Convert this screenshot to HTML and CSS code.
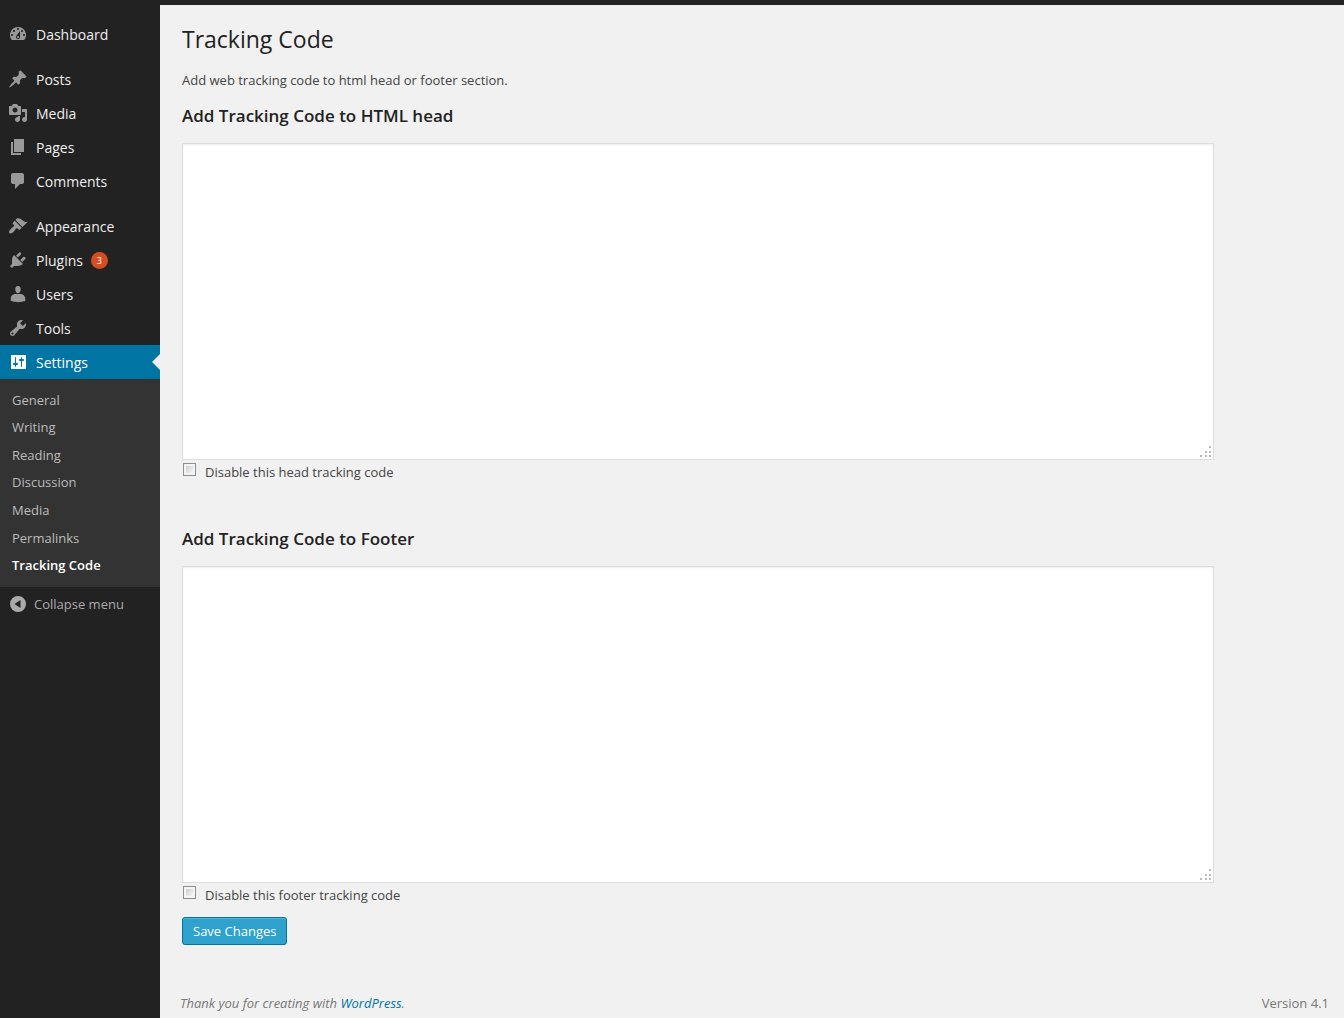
FILE: index.html
```html
<!DOCTYPE html>
<html lang="en">
<head>
<meta charset="utf-8">
<meta name="viewport" content="width=device-width, initial-scale=1">
<title>Tracking Code</title>
<link rel="stylesheet" href="styles.css">
</head>
<body>
<div class="topbar"></div>
<div class="layout">
  <nav class="sidebar" aria-label="Main menu">
    <ul class="menu">
      <li><a class="item" href="#"><svg class="icon" viewBox="0 0 20 20"><path fill-rule="evenodd" d="M3.76 16h12.48A7.998 7.998 0 0 0 10 3a7.998 7.998 0 0 0-6.24 13zM10 4c.55 0 1 .45 1 1s-.45 1-1 1-1-.45-1-1 .45-1 1-1zM6 6c.55 0 1 .45 1 1s-.45 1-1 1-1-.45-1-1 .45-1 1-1zm8 0c.55 0 1 .45 1 1s-.45 1-1 1-1-.45-1-1 .45-1 1-1zm-5.37 5.55L12 7v6c0 1.1-.9 2-2 2s-2-.9-2-2c0-.57.24-1.08.63-1.45zM4 10c.55 0 1 .45 1 1s-.45 1-1 1-1-.45-1-1 .45-1 1-1zm12 0c.55 0 1 .45 1 1s-.45 1-1 1-1-.45-1-1 .45-1 1-1zm-5 3c0-.55-.45-1-1-1s-1 .45-1 1 .45 1 1 1 1-.45 1-1z"/></svg>Dashboard</a></li>
      <li class="group"><a class="item" href="#"><svg class="icon" viewBox="0 0 20 20"><path d="M10.44 3.02l1.82-1.82 6.36 6.35-1.83 1.82c-1.05-.68-2.48-.57-3.41.36l-.75.75c-.92.93-1.04 2.35-.35 3.41l-1.83 1.82-2.41-2.41-2.8 2.79c-.42.42-3.38 2.71-3.8 2.29s1.86-3.39 2.28-3.81l2.79-2.79L4.1 9.36l1.83-1.82c1.05.69 2.48.57 3.4-.36l.75-.75c.93-.92 1.05-2.35.36-3.41z"/></svg>Posts</a></li>
      <li><a class="item" href="#"><svg class="icon" viewBox="0 0 20 20"><path fill-rule="evenodd" d="M13 11V4c0-.55-.45-1-1-1h-1.67L9 1H5L3.67 3H2c-.55 0-1 .45-1 1v7c0 .55.45 1 1 1h10c.55 0 1-.45 1-1zM7 4.5c1.38 0 2.5 1.12 2.5 2.5S8.38 9.5 7 9.5 4.5 8.38 4.5 7 5.62 4.5 7 4.5zM14 6h5v10.5c0 1.38-1.12 2.5-2.5 2.5S14 17.88 14 16.5s1.12-2.5 2.5-2.5c.17 0 .34.02.5.05V9h-3V6zm-4 8.05V13h2v3.5c0 1.38-1.12 2.5-2.5 2.5S7 17.88 7 16.5 8.12 14 9.5 14c.17 0 .34.02.5.05z"/></svg>Media</a></li>
      <li><a class="item" href="#"><svg class="icon" viewBox="0 0 20 20"><path d="M6 15V2h10v13H6zm-1 1h8v2H3V5h2v11z"/></svg>Pages</a></li>
      <li><a class="item" href="#"><svg class="icon" viewBox="0 0 20 20"><path d="M5 2h9c1.1 0 2 .9 2 2v7c0 1.1-.9 2-2 2h-2l-5 5v-5H5c-1.1 0-2-.9-2-2V4c0-1.1.9-2 2-2z"/></svg>Comments</a></li>
      <li class="group"><a class="item" href="#"><svg class="icon" viewBox="0 0 20 20"><path d="M14.48 11.06L7.41 3.99l1.5-1.5c.5-.56 2.3-.47 3.51.32 1.21.8 1.43 1.28 2.91 2.1 1.18.64 2.45 1.26 4.45.85zm-.71.71L6.7 4.7 4.93 6.47c-.39.39-.39 1.02 0 1.41l1.06 1.06c.39.39.39 1.03 0 1.42-.6.6-1.43 1.11-2.21 1.69-.35.26-.7.53-1.01.84C1.43 14.23.4 16.08 1.4 17.07c.99 1 2.84-.03 4.18-1.36.31-.31.58-.66.85-1.02.57-.78 1.08-1.61 1.69-2.21.39-.39 1.02-.39 1.41 0l1.06 1.06c.39.39 1.02.39 1.41 0z"/></svg>Appearance</a></li>
      <li><a class="item" href="#"><svg class="icon" viewBox="0 0 20 20"><path d="M13.11 4.36L9.87 7.6 8 5.73l3.24-3.24c.35-.34 1.05-.2 1.56.32.52.51.66 1.21.31 1.55zm-8 1.77l.91-1.12 9.01 9.01-1.19.84c-.71.71-2.63 1.16-3.82 1.16H6.14L4.9 17.26c-.59.59-1.54.59-2.12 0-.59-.58-.59-1.53 0-2.12l1.24-1.24v-3.88c0-1.13.4-3.19 1.09-3.89zm7.26 3.97l3.24-3.24c.34-.35 1.04-.21 1.55.31.52.51.66 1.21.31 1.55l-3.24 3.25z"/></svg>Plugins<span class="count">3</span></a></li>
      <li><a class="item" href="#"><svg class="icon" viewBox="0 0 20 20"><path d="M10 9.25c-2.27 0-2.73-3.44-2.73-3.44C7 4.02 7.82 2 9.97 2c2.16 0 2.98 2.02 2.71 3.81 0 0-.41 3.44-2.68 3.44zm0 .75h2.72c2.39 0 4.52 2.33 4.52 4.53v2.49s-3.65 1.13-7.24 1.13c-3.65 0-7.24-1.13-7.24-1.13v-2.49c0-2.25 1.94-4.48 4.47-4.48z"/></svg>Users</a></li>
      <li><a class="item" href="#"><svg class="icon" viewBox="0 0 20 20"><path fill-rule="evenodd" d="M16.68 9.77c-1.34 1.34-3.3 1.67-4.95.99l-5.41 6.52c-.99.99-2.59.99-3.58 0s-.99-2.59 0-3.57l6.52-5.42c-.68-1.65-.35-3.61.99-4.95 1.28-1.28 3.12-1.62 4.72-1.06l-2.89 2.89 2.82 2.82 2.86-2.87c.53 1.58.18 3.39-1.08 4.65zM3.81 16.21c.4.39 1.04.39 1.43 0 .4-.4.4-1.04 0-1.43-.39-.4-1.03-.4-1.43 0-.39.39-.39 1.03 0 1.43z"/></svg>Tools</a></li>
      <li>
        <a class="item current" href="#"><svg class="icon" viewBox="0 0 20 20"><path fill-rule="evenodd" d="M18 16V4c0-.55-.45-1-1-1H4c-.55 0-1 .45-1 1v12c0 .55.45 1 1 1h13c.55 0 1-.45 1-1zM8 11h1c.55 0 1 .45 1 1s-.45 1-1 1H8v1.5c0 .28-.22.5-.5.5s-.5-.22-.5-.5V13H6c-.55 0-1-.45-1-1s.45-1 1-1h1V5.5c0-.28.22-.5.5-.5s.5.22.5.5V11zm5-2h-1c-.55 0-1-.45-1-1s.45-1 1-1h1V5.5c0-.28.22-.5.5-.5s.5.22.5.5V7h1c.55 0 1 .45 1 1s-.45 1-1 1h-1v5.5c0 .28-.22.5-.5.5s-.5-.22-.5-.5V9z"/></svg>Settings</a>
        <ul class="submenu">
          <li><a href="#">General</a></li>
          <li><a href="#">Writing</a></li>
          <li><a href="#">Reading</a></li>
          <li><a href="#">Discussion</a></li>
          <li><a href="#">Media</a></li>
          <li><a href="#">Permalinks</a></li>
          <li><a class="active" href="#" aria-current="page">Tracking Code</a></li>
        </ul>
      </li>
    </ul>
    <button class="collapse" type="button"><svg class="icon" viewBox="0 0 20 20"><path fill-rule="evenodd" d="M10 2a8 8 0 1 0 0 16 8 8 0 0 0 0-16zM12.5 6v8L6.5 10z"/></svg>Collapse menu</button>
  </nav>
  <main class="content">
    <h1>Tracking Code</h1>
    <p class="intro">Add web tracking code to html head or footer section.</p>
    <form>
      <section class="block">
        <h2><label for="head-code">Add Tracking Code to HTML head</label></h2>
        <textarea id="head-code"></textarea>
        <div class="option"><input type="checkbox" id="head-off"><label for="head-off">Disable this head tracking code</label></div>
      </section>
      <section class="block">
        <h2><label for="footer-code">Add Tracking Code to Footer</label></h2>
        <textarea id="footer-code"></textarea>
        <div class="option"><input type="checkbox" id="footer-off"><label for="footer-off">Disable this footer tracking code</label></div>
      </section>
      <button class="save" type="button">Save Changes</button>
    </form>
    <footer class="footer">
      <p class="thanks">Thank you for creating with <a href="#">WordPress</a>.</p>
      <p>Version 4.1</p>
    </footer>
  </main>
</div>
</body>
</html>
```
FILE: styles.css
```css
* {
  box-sizing: border-box;
}

body {
  margin: 0;
  min-height: 100vh;
  display: flex;
  flex-direction: column;
  background: #f1f1f1;
  color: #444;
  font: 13px/18px "Open Sans", sans-serif;
}

h1,
h2,
p,
ul {
  margin: 0;
  padding: 0;
  font-weight: 400;
}

ul {
  list-style: none;
}

a {
  color: #0074a2;
  text-decoration: none;
}

.topbar {
  height: 5px;
  background: #222;
}

.layout {
  flex: 1;
  display: flex;
}

/* Sidebar */
.sidebar {
  width: 160px;
  flex: none;
  padding-top: 12px;
  background: #222;
}

.group {
  margin-top: 11px;
}

.item {
  display: flex;
  gap: 8px;
  height: 34px;
  padding-left: 8px;
  color: #eee;
  font-size: 14px;
  line-height: 36px;
}

.icon {
  width: 20px;
  height: 20px;
  flex: none;
  fill: #999;
}

.item .icon {
  margin-top: 7px;
}

.count {
  width: 17px;
  height: 17px;
  margin-top: 9px;
  border-radius: 50%;
  background: #d54e21;
  color: #fff;
  font-size: 9px;
  line-height: 17px;
  text-align: center;
}

.current {
  position: relative;
  background: #0074a2;
  color: #fff;
}

.current .icon {
  fill: #fff;
}

.current::after {
  content: "";
  position: absolute;
  top: 9px;
  right: 0;
  border: 8px solid transparent;
  border-left: 0;
  border-right-color: #f1f1f1;
}

.submenu {
  display: grid;
  grid-auto-rows: 1fr;
  min-height: 208px;
  padding: 7px 0 8px;
  background: #333;
}

.submenu li {
  display: flex;
  align-items: center;
}

.submenu a {
  flex: 1;
  padding-left: 12px;
  color: #bbb;
}

.submenu .active {
  color: #fff;
  font-weight: 600;
}

.collapse {
  display: flex;
  align-items: center;
  gap: 6px;
  height: 34px;
  padding: 0 8px;
  border: 0;
  background: none;
  color: #aaa;
  font: inherit;
}

.collapse .icon {
  fill: #aaa;
}

/* Content */
.content {
  flex: 1;
  display: flex;
  flex-direction: column;
  padding: 20px 15px 6px 22px;
}

h1 {
  color: #222;
  font-size: 23px;
  line-height: 29px;
}

.intro {
  margin-top: 17px;
}

h2 {
  color: #222;
  font-size: 17px;
  font-weight: 600;
  line-height: 24px;
}

.block {
  margin-top: 15px;
}

.block + .block {
  margin-top: 46px;
}

textarea {
  display: block;
  width: 90%;
  height: 317px;
  margin-top: 15px;
  padding: 2px 6px;
  border: 1px solid #ddd;
  border-radius: 0;
  background: #fff;
  box-shadow: inset 0 1px 2px rgba(0, 0, 0, 0.07);
  font: inherit;
  resize: both;
}

/* Dotted drag handle */
textarea::-webkit-resizer {
  background:
    linear-gradient(#bbb, #bbb) 11px 2px / 2px 2px no-repeat,
    linear-gradient(#bbb, #bbb) 7px 7px / 2px 2px no-repeat,
    linear-gradient(#bbb, #bbb) 11px 7px / 2px 2px no-repeat,
    linear-gradient(#bbb, #bbb) 2px 11px / 2px 2px no-repeat,
    linear-gradient(#bbb, #bbb) 7px 11px / 2px 2px no-repeat,
    linear-gradient(#bbb, #bbb) 11px 11px / 2px 2px no-repeat;
}

.option {
  display: flex;
  align-items: flex-start;
  gap: 9px;
  padding: 3px 0 0 1px;
}

.option input {
  appearance: none;
  width: 13px;
  height: 13px;
  margin: 0;
  border: 1px solid #8e8f8f;
  background: linear-gradient(135deg, #cbcfd5, #f6f6f6) content-box, #f4f4f4;
  padding: 2px;
}

.option input:checked {
  background: #0074a2 content-box;
}

.save {
  height: 28px;
  margin-top: 13px;
  padding: 0 10px;
  border: 1px solid #0074a2;
  border-radius: 3px;
  background: #2ea2cc;
  box-shadow: inset 0 1px 0 rgba(120, 200, 230, 0.5);
  color: #fff;
  font: inherit;
}

.footer {
  display: flex;
  justify-content: space-between;
  margin: auto 0 0 -2px;
  padding-top: 20px;
  color: #777;
}

.thanks {
  font-style: italic;
}
```
